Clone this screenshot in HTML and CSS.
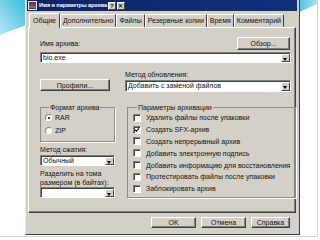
FILE: index.html
```html
<!DOCTYPE html>
<html>
<head>
    <meta charset="utf-8">
    <title>Имя и параметры архива</title>
    <link rel="stylesheet" href="styles.css">
</head>
<body>
    <div class="slide">
        <svg class="deco deco-left" viewBox="0 0 26 36">
            <defs>
                <linearGradient id="tealLeft" x1="0" y1="1" x2="1" y2="0">
                    <stop offset="0" stop-color="#b8e8f4"/>
                    <stop offset="1" stop-color="#36bcdc"/>
                </linearGradient>
            </defs>
            <polygon points="0,0 26,0 26,25 0,35" fill="url(#tealLeft)"/>
        </svg>
        <svg class="deco deco-right" viewBox="0 0 22 14">
            <defs>
                <linearGradient id="tealRight" x1="0" y1="0" x2="1" y2="0">
                    <stop offset="0" stop-color="#38bddc"/>
                    <stop offset="1" stop-color="#a6e2f2"/>
                </linearGradient>
            </defs>
            <polygon points="0,0 22,0 22,4 0,14" fill="url(#tealRight)"/>
        </svg>

        <div class="dialog">
            <div class="titlebar">
                <svg class="app-icon" viewBox="0 0 9 9">
                    <rect x="0" y="0" width="9" height="9" fill="#e8e8f0"/>
                    <rect x="1" y="1" width="7" height="2" fill="#5a2a9a"/>
                    <rect x="1" y="3" width="7" height="2" fill="#d82020"/>
                    <rect x="1" y="5" width="7" height="2" fill="#20a040"/>
                    <rect x="1" y="7" width="7" height="1" fill="#2040c0"/>
                </svg>
                <span class="title">Имя и параметры архива</span>
                <span class="title-btn">?</span>
                <span class="title-btn">✕</span>
            </div>

            <div class="tabs">
                <span class="tab active">Общие</span>
                <span class="tab">Дополнительно</span>
                <span class="tab">Файлы</span>
                <span class="tab">Резервные копии</span>
                <span class="tab">Время</span>
                <span class="tab">Комментарий</span>
            </div>

            <div class="panel">
                <div class="row-name">
                    <span class="label">Имя архива:</span>
                    <button class="btn btn-browse">Обзор...</button>
                </div>
                <div class="combo combo-name">
                    <span class="combo-text">bio.exe</span>
                    <span class="combo-arrow"></span>
                </div>

                <div class="row-update">
                    <button class="btn btn-profiles">Профили...</button>
                    <div>
                        <div class="label">Метод обновления:</div>
                        <div class="combo combo-update">
                            <span class="combo-text">Добавить с заменой файлов</span>
                            <span class="combo-arrow"></span>
                        </div>
                    </div>
                </div>

                <div class="row-options">
                    <div class="col-left">
                        <fieldset class="group group-format">
                            <legend>Формат архива</legend>
                            <div class="radio-row"><span class="radio checked"></span>RAR</div>
                            <div class="radio-row"><span class="radio"></span>ZIP</div>
                        </fieldset>
                        <div class="label label-method">Метод сжатия:</div>
                        <div class="combo combo-small">
                            <span class="combo-text">Обычный</span>
                            <span class="combo-arrow"></span>
                        </div>
                        <div class="label label-split">Разделить на тома<br>размером (в байтах):</div>
                        <div class="combo combo-small combo-split">
                            <span class="combo-text"></span>
                            <span class="combo-arrow"></span>
                        </div>
                    </div>

                    <fieldset class="group group-params">
                        <legend>Параметры архивации</legend>
                        <div class="check-row"><span class="check"></span>Удалить файлы после упаковки</div>
                        <div class="check-row"><span class="check"><svg viewBox="0 0 8 8"><path d="M1.5 3.8 L3.2 5.6 L6.6 1.9" fill="none" stroke="#000" stroke-width="1.4"/></svg></span>Создать SFX-архив</div>
                        <div class="check-row"><span class="check"></span>Создать непрерывный архив</div>
                        <div class="check-row"><span class="check"></span>Добавить электронную подпись</div>
                        <div class="check-row"><span class="check"></span>Добавить информацию для восстановления</div>
                        <div class="check-row"><span class="check"></span>Протестировать файлы после упаковки</div>
                        <div class="check-row"><span class="check"></span>Заблокировать архив</div>
                    </fieldset>
                </div>
            </div>

            <div class="actions">
                <button class="btn btn-action">OK</button>
                <button class="btn btn-action">Отмена</button>
                <button class="btn btn-action btn-help">Справка</button>
            </div>
        </div>
    </div>
</body>
</html>
```

FILE: styles.css
```css
/* Reset and base styles */
* {
    margin: 0;
    padding: 0;
    box-sizing: border-box;
    font-family: "Liberation Sans", Arial, sans-serif;
}

body {
    width: 320px;
    height: 240px;
    overflow: hidden;
    background: #fff;
    color: #111;
    font-size: 7px;
    line-height: 9px;
}

/* Slide frame */
.slide {
    position: relative;
    width: 318px;
    height: 237px;
    border-right: 1px solid #d4d4d4;
    border-bottom: 1px solid #d4d4d4;
}

.deco {
    position: absolute;
    top: 0;
}

.deco-left {
    left: 0;
    width: 26px;
    height: 36px;
}

.deco-right {
    right: 0;
    width: 22px;
    height: 14px;
}

/* Dialog window */
.dialog {
    position: relative;
    margin-left: 25px;
    width: 275px;
    height: 235px;
    background: #d4d0c8;
    border-left: 1px solid #eceae6;
    border-right: 1px solid #404040;
    border-bottom: 1px solid #404040;
    padding: 0 2px 0 1px;
}

.titlebar {
    display: flex;
    align-items: center;
    height: 11px;
    padding: 0 1px;
    background: linear-gradient(90deg, #0a246a, #12307a);
}

.app-icon {
    width: 9px;
    height: 9px;
    margin-right: 2px;
}

.title {
    color: #fff;
    font-weight: bold;
    font-size: 5.6px;
    letter-spacing: -0.1px;
}

.title-btn {
    width: 8px;
    height: 8px;
    margin-left: 1px;
    background: #d4d0c8;
    border-top: 1px solid #fff;
    border-left: 1px solid #fff;
    border-right: 1px solid #404040;
    border-bottom: 1px solid #404040;
    font-size: 6px;
    line-height: 6px;
    font-weight: bold;
    text-align: center;
}

.title-btn:first-of-type {
    margin-left: auto;
}

/* Tabs */
.tabs {
    display: flex;
    align-items: flex-end;
    height: 16px;
    padding-left: 2px;
}

.tab {
    position: relative;
    height: 13px;
    padding: 0 2px;
    line-height: 12px;
    border-top: 1px solid #fff;
    border-left: 1px solid #fff;
    border-right: 1px solid #404040;
    border-radius: 1px 1px 0 0;
    white-space: nowrap;
}

.tab.active {
    height: 15px;
    margin-bottom: -1px;
    padding: 0 3px;
    line-height: 13px;
    background: #d4d0c8;
    z-index: 1;
}

/* Tab panel */
.panel {
    height: 186px;
    margin: 0 1px;
    padding: 9px 4px 0 11px;
    border-top: 1px solid #fff;
    border-left: 1px solid #fff;
    border-right: 1px solid #404040;
    border-bottom: 1px solid #404040;
    box-shadow: inset -1px -1px 0 #808080;
}

.label {
    height: 9px;
    white-space: nowrap;
}

.row-name {
    display: flex;
    justify-content: space-between;
    align-items: center;
    height: 13px;
}

/* Buttons */
.btn {
    height: 13px;
    background: #d4d0c8;
    border-top: 1px solid #fff;
    border-left: 1px solid #fff;
    border-right: 1px solid #404040;
    border-bottom: 1px solid #404040;
    box-shadow: inset -1px -1px 0 #808080;
    font-size: 7px;
    color: #111;
    text-align: center;
}

.btn-browse {
    width: 53px;
    margin-right: 1px;
}

.btn-profiles {
    align-self: end;
    width: 70px;
    height: 12px;
    margin-bottom: 1px;
}

/* Combo boxes */
.combo {
    display: flex;
    align-items: stretch;
    height: 11px;
    background: #fff;
    border-top: 1px solid #808080;
    border-left: 1px solid #808080;
    border-right: 1px solid #fff;
    border-bottom: 1px solid #fff;
    box-shadow: inset 1px 1px 0 #404040;
}

.combo-text {
    flex: 1;
    padding-left: 2px;
    line-height: 9px;
    white-space: nowrap;
    overflow: hidden;
}

.combo-arrow {
    position: relative;
    width: 9px;
    margin: 1px 0 0;
    background: #d4d0c8;
    border-top: 1px solid #fff;
    border-left: 1px solid #fff;
    border-right: 1px solid #404040;
    border-bottom: 1px solid #404040;
}

.combo-arrow::after {
    content: "";
    position: absolute;
    left: 1px;
    top: 3px;
    border-left: 2.5px solid transparent;
    border-right: 2.5px solid transparent;
    border-top: 3px solid #000;
}

.combo-name {
    margin-top: 2px;
}

.combo-update {
    height: 12px;
    margin-top: 1px;
}

.combo-small {
    margin-top: 1px;
}

.combo-split {
    margin-top: 0;
}

/* Update row */
.row-update {
    display: grid;
    grid-template-columns: 70px 166px;
    column-gap: 15px;
    margin-top: 7px;
}

/* Options */
.row-options {
    display: grid;
    grid-template-columns: 75px 164px;
    column-gap: 12px;
    margin-top: 11px;
}

.group {
    border: 1px solid #8e8b86;
    box-shadow: 1px 1px 0 #fff;
}

.group legend {
    margin-left: 4px;
    padding: 0 1px;
    line-height: 9px;
}

.group-format {
    height: 39px;
    padding: 0 4px;
}

.radio-row {
    display: flex;
    align-items: center;
    height: 13px;
}

.radio-row:first-of-type {
    margin-top: -1px;
}

.radio {
    position: relative;
    width: 7px;
    height: 7px;
    margin-right: 3px;
    border-radius: 50%;
    background: #fff;
    border: 1px solid #808080;
    border-right-color: #fff;
    border-bottom-color: #fff;
}

.radio.checked::after {
    content: "";
    position: absolute;
    left: 1.5px;
    top: 1.5px;
    width: 2px;
    height: 2px;
    border-radius: 50%;
    background: #000;
}

.label-method {
    margin-top: 3px;
}

.label-split {
    height: 18px;
    margin-top: 3px;
}

.group-params {
    height: 95px;
    padding: 0 5px;
}

.check-row {
    display: flex;
    align-items: center;
    height: 11.8px;
    white-space: nowrap;
}

.check {
    width: 8px;
    height: 8px;
    margin-right: 5px;
    background: #fff;
    border-top: 1px solid #808080;
    border-left: 1px solid #808080;
    border-right: 1px solid #fff;
    border-bottom: 1px solid #fff;
    box-shadow: inset 1px 1px 0 #404040;
}

.check svg {
    display: block;
    width: 6px;
    height: 6px;
}

/* Dialog buttons */
.actions {
    display: flex;
    justify-content: flex-end;
    gap: 5px;
    margin-top: 4px;
    padding-right: 7px;
}

.btn-action {
    width: 45px;
    height: 11px;
    line-height: 8px;
}

.btn-help {
    width: 39px;
}
```
